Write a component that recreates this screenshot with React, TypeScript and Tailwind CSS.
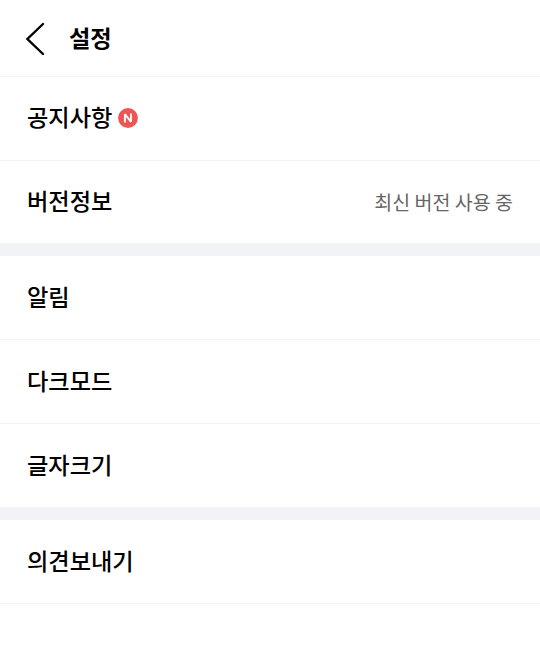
import React from 'react'
import clsx from 'clsx'

type Item = {
    label: string
    isNew?: boolean
    value?: string
}

const groups: { height: string; items: Item[] }[] = [
    {
        height: 'h-[179px]',
        items: [{ label: '공지사항', isNew: true }, { label: '버전정보', value: '최신 버전 사용 중' }],
    },
    { height: 'h-[264px]', items: [{ label: '알림' }, { label: '다크모드' }, { label: '글자크기' }] },
    { height: 'h-[84px]', items: [{ label: '의견보내기' }] },
]

const NewBadge: React.FC = () => (
    <svg className="ml-[5.6px]" viewBox="0 0 20 20" width="20" height="20" fill="none">
        <circle cx="10" cy="10" r="9.9" fill="#ef5455" />
        <path d="M6.9 14.4V6.2L13 13.8V5.6" stroke="white" strokeWidth="1.9" strokeLinejoin="bevel" />
    </svg>
)

const Row: React.FC<{ item: Item }> = ({ item }) => (
    <li className={clsx('flex h-[84px] shrink-0 items-center justify-between px-[27px] last:h-auto last:flex-1', item.isNew && 'pb-px')}>
        <span className="flex items-center text-[23.2px] leading-none font-medium text-black">
            <span className="-mt-0.5">{item.label}</span>
            {item.isNew && <NewBadge />}
        </span>
        {item.value && <span className="-mt-px text-[19.5px] leading-none text-[#666666]">{item.value}</span>}
    </li>
)

export default function App() {
    return (
        <div className="h-[649px] w-[540px] overflow-hidden bg-white font-['Noto_Sans_CJK_KR',sans-serif]">
            <header className="flex h-[77px] items-center border-b border-[#f3f3f5] pl-[25px]">
                <button title="뒤로" className="mt-0.5 text-black">
                    <svg viewBox="0 0 20 34" width="20" height="34" fill="none" stroke="currentColor" strokeWidth="2.4" strokeLinecap="round">
                        <path d="M18 2L2.4 17L18 32" />
                    </svg>
                </button>
                <h1 className="-mt-px ml-6 text-[23.2px] leading-none font-bold text-black">설정</h1>
            </header>

            {groups.map(({ height, items }, i) => (
                <ul
                    key={i}
                    className={clsx('flex flex-col divide-y divide-[#f3f3f5] border-b-[13px] border-[#f2f3f7] last:border-b', height)}
                >
                    {items.map(item => <Row key={item.label} item={item} />)}
                </ul>
            ))}
        </div>
    )
}
